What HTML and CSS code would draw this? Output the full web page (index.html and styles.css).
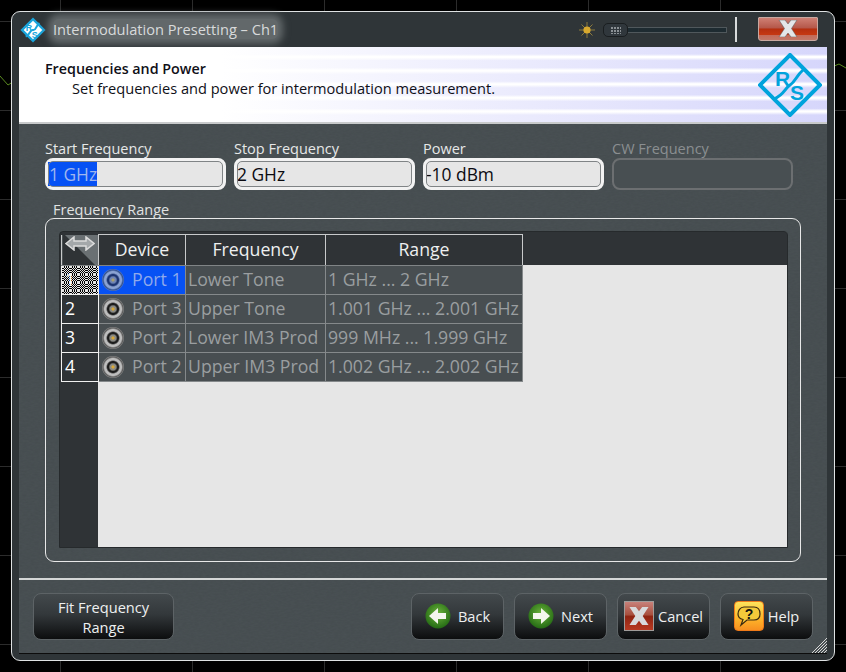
FILE: index.html
```html
<!DOCTYPE html>
<html>
<head>
	<meta charset="utf-8">
	<title>Intermodulation Presetting</title>
	<link rel="stylesheet" href="styles.css">
</head>
<body>
	<!-- grid and trace of the instrument screen behind the dialog -->
	<svg class="trace" width="846" height="672">
		<polyline points="0,76 8,85 19,78" fill="none" stroke="#5a8a20"/>
		<polyline points="827,69 839,64 846,68" fill="none" stroke="#5a8a20"/>
	</svg>
	<div class="window">
		<div class="titlebar">
			<svg class="title-logo" width="26" height="26" viewBox="0 0 64 64">
				<path d="M32 1 63 32 32 63 1 32Z" fill="#1aa5dc"/>
				<path d="M32 9 55 32 32 55 9 32Z" fill="#fff"/>
				<path d="M14 48C26 44 24 30 32 32S38 22 48 15" fill="none" stroke="#1aa5dc" stroke-width="5"/>
				<text x="14" y="35" class="logo-letter">R</text>
				<text x="29" y="52" class="logo-letter">S</text>
			</svg>
			<span class="title-text">Intermodulation Presetting – Ch1</span>
			<svg class="sun" width="16" height="16" viewBox="0 0 16 16">
				<path d="M8 0V16M0 8H16M2.500 2.500 13.500 13.500M13.500 2.500 2.500 13.500" stroke="#8c7a3c"/>
				<circle cx="8" cy="8" r="3.600" fill="#d8a92e"/>
			</svg>
			<div class="slider">
				<div class="slider-thumb"><span class="thumb-dots"></span></div>
				<div class="slider-track"></div>
			</div>
			<div class="title-sep"></div>
			<div class="close-btn">
				<svg width="20" height="17" viewBox="0 0 20 17">
					<path d="M1 0H7L10 4 13 0H19L13.500 8.500 19 17H13L10 13 7 17H1L6.500 8.500Z" fill="#e4e6e8" stroke="#555" stroke-width=".5"/>
				</svg>
			</div>
		</div>
		<div class="inner">
			<div class="banner">
				<div class="banner-text">
					<div class="banner-title">Frequencies and Power</div>
					<div class="banner-desc">Set frequencies and power for intermodulation measurement.</div>
				</div>
				<svg class="banner-logo" width="64" height="64" viewBox="0 0 64 64">
					<path d="M32 2 62 32 32 62 2 32Z" fill="none" stroke="#00a3dc" stroke-width="4"/>
					<path d="M16 46C27 41 26 36 32 32S37 24 46 16" fill="none" stroke="#00a3dc" stroke-width="3"/>
					<text x="17" y="33" class="logo-big">R</text>
					<text x="32" y="47" class="logo-big">S</text>
				</svg>
			</div>
			<div class="content">
				<div class="fields">
					<label class="field">Start Frequency
						<div class="input"><span class="selected">1 GHz</span></div>
					</label>
					<label class="field">Stop Frequency
						<div class="input">2 GHz</div>
					</label>
					<label class="field">Power
						<div class="input">-10 dBm</div>
					</label>
					<label class="field disabled">CW Frequency
						<div class="input"></div>
					</label>
				</div>
				<div class="group-label">Frequency Range</div>
				<div class="group">
					<div class="table-wrap">
						<table class="ports">
							<tr>
								<th class="corner">
									<svg width="30" height="15" viewBox="0 0 30 15">
										<path d="M1 7.500 9 1V5H21V1L29 7.500 21 14V10H9V14Z" fill="#a4a8aa" stroke="#dcdcdc" stroke-width="1.500"/>
									</svg>
								</th>
								<th class="col-device">Device</th>
								<th class="col-freq">Frequency</th>
								<th class="col-range">Range</th>
							</tr>
							<tr class="active">
								<td class="num">1</td>
								<td class="device"><span class="port-icon"></span>Port 1</td>
								<td>Lower Tone</td>
								<td>1 GHz ... 2 GHz</td>
							</tr>
							<tr>
								<td class="num">2</td>
								<td class="device"><span class="port-icon"></span>Port 3</td>
								<td>Upper Tone</td>
								<td>1.001 GHz ... 2.001 GHz</td>
							</tr>
							<tr>
								<td class="num">3</td>
								<td class="device"><span class="port-icon"></span>Port 2</td>
								<td>Lower IM3 Prod</td>
								<td>999 MHz ... 1.999 GHz</td>
							</tr>
							<tr>
								<td class="num">4</td>
								<td class="device"><span class="port-icon"></span>Port 2</td>
								<td>Upper IM3 Prod</td>
								<td>1.002 GHz ... 2.002 GHz</td>
							</tr>
						</table>
					</div>
				</div>
			</div>
			<div class="footer">
				<div class="btn btn-fit">Fit Frequency<br>Range</div>
				<div class="btn-row">
					<div class="btn">
						<svg width="26" height="26" viewBox="0 0 26 26">
							<circle cx="13" cy="13" r="12.500" fill="url(#green)"/>
							<path d="M4 13 13 5V10H21V16H13V21Z" fill="#f4f6ee"/>
						</svg>
						Back
					</div>
					<div class="btn">
						<svg width="26" height="26" viewBox="0 0 26 26">
							<circle cx="13" cy="13" r="12.500" fill="url(#green)"/>
							<path d="M22 13 13 5V10H5V16H13V21Z" fill="#f4f6ee"/>
						</svg>
						Next
					</div>
					<div class="btn btn-tight">
						<div class="cancel-icon">
							<svg width="22" height="18" viewBox="0 0 20 17">
								<path d="M1 0H7L10 4 13 0H19L13.500 8.500 19 17H13L10 13 7 17H1L6.500 8.500Z" fill="#d8dadc"/>
							</svg>
						</div>
						Cancel
					</div>
					<div class="btn btn-tight">
						<div class="help-icon">
							<svg width="24" height="24" viewBox="0 0 24 24">
								<path d="M7 3H17C20 3 23 5 23 10S20 16 17 16H10L4 21 6 15.500C3 15 1 13 1 10S3 3 7 3Z" fill="#f4c93a" stroke="#3a2a10" stroke-width="1.200"/>
								<text x="12" y="15" class="help-mark">?</text>
							</svg>
						</div>
						Help
					</div>
				</div>
				<svg class="grip" width="16" height="16" viewBox="0 0 16 16">
					<path d="M16 1 1 16M16 4 4 16M16 7 7 16M16 10 10 16M16 13 13 16" stroke="#d8d8d8"/>
				</svg>
			</div>
		</div>
	</div>
	<svg width="0" height="0" class="defs">
		<defs>
			<radialGradient id="green" cx=".5" cy=".4" r=".6">
				<stop offset="0" stop-color="#6cb43c"/>
				<stop offset="1" stop-color="#246a14"/>
			</radialGradient>
		</defs>
	</svg>
</body>
</html>
```

FILE: styles.css
```css
* {
	box-sizing: border-box;
}

html, body {
	margin: 0;
	height: 672px;
	overflow: hidden;
}

body {
	position: relative;
	padding: 11px 0 0 11px;
	font-family: "Open Sans", "Noto Sans", sans-serif;
	background-color: #000;
	background-image:
		repeating-linear-gradient(90deg, transparent 0 60px, #2c2c2c 60px 61px, transparent 61px 132px),
		repeating-linear-gradient(180deg, transparent 0 21px, #2c2c2c 21px 22px, transparent 22px 89px);
}

.trace {
	position: absolute;
	top: 0;
	left: 0;
}

.defs {
	position: absolute;
}

.window {
	position: relative;
	width: 824px;
	height: 650px;
	display: flex;
	flex-direction: column;
	padding: 0 7px 6px;
	background: #2f3538;
	border: 1px solid #dfe2e3;
	border-radius: 9px;
}

/* title bar */
.titlebar {
	height: 35px;
	display: flex;
	align-items: center;
	flex-shrink: 0;
	color: #d8dadb;
}

.title-logo {
	margin-left: 1px;
	flex-shrink: 0;
}

.title-logo .logo-letter {
	font: bold 22px "Liberation Sans", sans-serif;
	fill: #1aa5dc;
}

.title-text {
	margin: 0 0 2px 7px;
	font-size: 14.600px;
	background: #62686a;
	box-shadow: 0 0 7px 5px #62686a;
	border-radius: 6px;
	line-height: 20px;
}

.sun {
	margin-left: auto;
}

.slider {
	display: flex;
	align-items: center;
	width: 124px;
	margin-left: 8px;
}

.slider-thumb {
	width: 25px;
	height: 14px;
	display: flex;
	align-items: center;
	justify-content: center;
	background: #30373c;
	border: 1px solid #1a1e20;
	border-radius: 5px;
}

.thumb-dots {
	width: 10px;
	height: 8px;
	background: linear-gradient(#30373c 1px, transparent 1px) 0 0 / 3px 3px, linear-gradient(90deg, #8a9094 2px, #30373c 2px) 0 0 / 3px 3px;
}

.slider-track {
	flex: 1;
	height: 6px;
	background: #1e2b31;
	border: 1px solid #50585c;
	border-left: 0;
}

.title-sep {
	width: 2px;
	height: 25px;
	margin-left: 8px;
	background: #d8dadb;
}

.close-btn {
	width: 60px;
	height: 24px;
	margin: 0 9px 2px 21px;
	display: flex;
	align-items: center;
	justify-content: center;
	background: linear-gradient(#cf8074 0, #b5584a 45%, #b52f10 50%, #c53812 75%, #c46a58 78%, #c27868 100%);
	border: 1px solid #c8a8a0;
	border-radius: 1px 1px 3px 3px;
}

/* inner panel */
.inner {
	flex: 1;
	display: flex;
	flex-direction: column;
	border-bottom: 1px solid #0c0c0c;
	background-color: #454c4f;
	background-image: url("data:image/svg+xml,%3Csvg xmlns='http://www.w3.org/2000/svg' width='220' height='220'%3E%3Cfilter id='n'%3E%3CfeTurbulence type='fractalNoise' baseFrequency='.25 .6' numOctaves='2' stitchTiles='stitch'/%3E%3CfeColorMatrix values='0 0 0 0 .1 0 0 0 0 .12 0 0 0 0 .13 .6 0 0 0 -.1'/%3E%3C/filter%3E%3Crect width='220' height='220' filter='url(%23n)' opacity='.5'/%3E%3C/svg%3E");
}

.banner {
	height: 77px;
	flex-shrink: 0;
	display: flex;
	justify-content: space-between;
	padding: 6px 5px 0 26px;
	border-bottom: 2px solid #c8cacb;
	background:
		repeating-linear-gradient(180deg, transparent 0 7px, #fff 9.500px, #fff 10.500px, transparent 13.600px),
		linear-gradient(90deg, #fff 0, #fff 25%, #d6d6fb 100%);
}

.banner-text {
	padding-top: 6px;
	color: #101018;
	font-size: 14.600px;
	line-height: 19px;
}

.banner-title {
	font-size: 14.300px;
	font-weight: 600;
	line-height: 20px;
}

.banner-desc {
	margin-left: 27px;
}

.logo-big {
	font: bold 21px "Liberation Sans", sans-serif;
	fill: #00a3dc;
}

.content {
	flex: 1;
	padding: 16px 26px 0;
}

.fields {
	display: flex;
	gap: 8px;
}

.field {
	width: 181px;
	color: #e6e8e8;
	font-size: 14.500px;
	line-height: 18px;
}

.input {
	height: 32px;
	padding: 0 0 1px;
	display: flex;
	align-items: center;
	color: #0a0a10;
	font-size: 17.400px;
	background: #e6e6e6;
	border: 3px solid #f2f2f2;
	outline: 1px solid #808486;
	outline-offset: -4px;
	border-radius: 8px;
}

.selected {
	height: 24px;
	width: 49px;
	line-height: 24px;
	padding-left: 1px;
	white-space: nowrap;
	background: #0651f4;
	color: #9fb6ee;
}

.disabled {
	color: #8b8f91;
}

.disabled .input {
	background: #484f52;
	border: 2px solid #6c6f71;
	outline: 0;
}

.group-label {
	margin: 11px 0 0 8px;
	color: #e0e2e2;
	font-size: 14.500px;
	line-height: 18px;
}

.group {
	width: 756px;
	height: 344px;
	margin-top: -1px;
	padding: 12px 12px 13px 13px;
	border: 1px solid #e8e8e8;
	border-radius: 9px;
}

.table-wrap {
	height: 100%;
	width: 729px;
	padding: 2px 0 0 1px;
	background:
		linear-gradient(#2f3336 33px, transparent 33px),
		linear-gradient(90deg, #2f3336 38px, #e6e6e6 38px);
	border: 1px solid #262a2c;
	border-radius: 4px 4px 0 0;
}

/* table */
.ports {
	border-collapse: collapse;
	table-layout: fixed;
	width: 461px;
	font-size: 17.700px;
}

.ports th {
	height: 31px;
	padding: 0 0 2px;
	font-weight: 400;
	color: #eef0f0;
	border: 1px solid #c8cacb;
	border-bottom-color: #808486;
	background: #2f3336;
}

.ports th.corner {
	width: 37px;
	vertical-align: top;
	line-height: 0;
	padding: 1px 0 0;
	background: linear-gradient(45deg, #2f3336 50%, #6a7073 50%);
	border-top: 0;
}

.col-device {
	width: 87px;
}

.col-freq {
	width: 140px;
}

.col-range {
	width: 197px;
}

.ports td {
	height: 29px;
	padding: 0 0 2px 2px;
	white-space: nowrap;
	color: #9a9ea0;
	background: #484e51;
	border: 1px solid #85898b;
}

.ports td.num {
	padding-left: 3px;
	color: #fff;
	background: #2f3336;
	border-color: #f0f0f0;
}

/* 8px tile of dashed lines, one pixel checkerboard */
.ports .active td.num {
	background: #000 url("data:image/svg+xml,%3Csvg xmlns='http://www.w3.org/2000/svg' width='8' height='8'%3E%3Cpath d='M0 .5H8M1 1.500H8M0 2.500H8M1 3.500H8M0 4.500H8M1 5.500H8M0 6.500H8M1 7.500H8' stroke='%23e4e4e4' stroke-dasharray='1' shape-rendering='crispEdges'/%3E%3C/svg%3E");
}

.active td.device {
	background: #0651f4;
	color: #8fa9ea;
}

.ports td.device {
	padding-left: 3px;
}

.port-icon {
	display: inline-block;
	width: 22px;
	height: 22px;
	margin-right: 8px;
	vertical-align: -5px;
	border-radius: 50%;
	background:
		radial-gradient(circle, #d8a838 0 1.200px, #8a8a84 2px 3px, #1c1c1c 4.500px 5.500px, #bdbdbd 7px 8.500px, #5a5a5a 10px, #8a8a8a 11px);
}

.active .port-icon {
	background:
		radial-gradient(circle, #a8a070 0 1.200px, #6f84b4 2px 3px, #1c3470 4.500px 5.500px, #8aa2d2 7px 8.500px, #2f4f90 10px, #5f7ab8 11px);
}

/* footer */
.footer {
	position: relative;
	height: 75px;
	flex-shrink: 0;
	display: flex;
	justify-content: space-between;
	padding: 13px 14px 0;
	border-top: 2px solid #d4d6d6;
}

.btn {
	height: 47px;
	width: 93px;
	padding-bottom: 2px;
	display: flex;
	align-items: center;
	justify-content: center;
	gap: 7px;
	color: #eef0f0;
	font-size: 14.600px;
	background: linear-gradient(#43494c, #33383b 45%, #0c0d0e);
	border: 1px solid #5d6366;
	border-radius: 8px;
}

.btn-tight {
	gap: 4px;
}

.btn-fit {
	display: block;
	width: 141px;
	padding: 3px 0 0;
	text-align: center;
	line-height: 20px;
}

.btn-row {
	display: flex;
	gap: 10px;
}

.cancel-icon {
	width: 30px;
	height: 30px;
	display: flex;
	align-items: center;
	justify-content: center;
	flex-shrink: 0;
	background: linear-gradient(#c8817a, #a8503f 45%, #8f2412 52%, #b83a22);
	border: 1px solid #a09c9a;
}

.help-icon {
	width: 30px;
	height: 30px;
	display: flex;
	align-items: center;
	justify-content: center;
	flex-shrink: 0;
	background: linear-gradient(#fde35c, #fdb52a 60%, #f89020);
	border: 1px solid #f07a18;
	border-radius: 4px;
}

.help-mark {
	font: bold 14px "Liberation Sans", sans-serif;
	fill: #111;
	text-anchor: middle;
}

.grip {
	position: absolute;
	right: 0;
	bottom: 0;
}
```
